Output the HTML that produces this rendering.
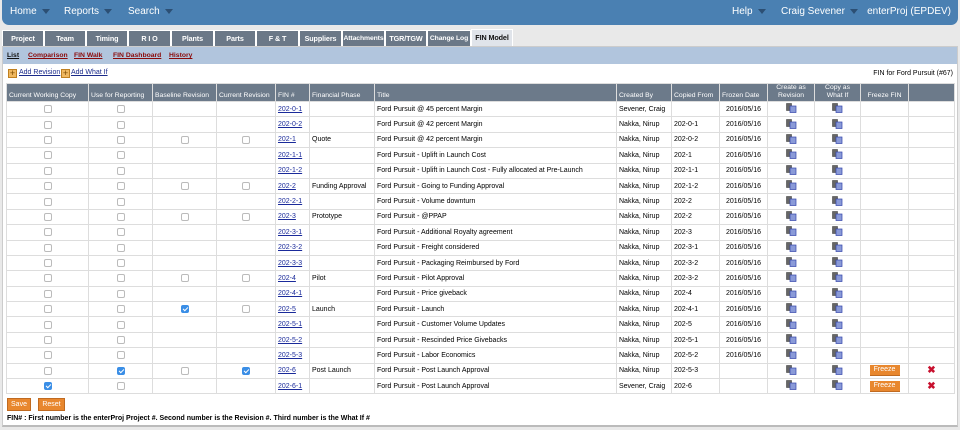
<!DOCTYPE html>
<html><head><meta charset="utf-8"><style>
*{box-sizing:border-box;margin:0;padding:0}
body{width:960px;height:430px;background:#e9e9e9;font-family:"Liberation Sans",Verdana,sans-serif;position:relative;overflow:hidden;font-size:8px;color:#000}
.nav{position:absolute;left:2px;top:0;width:956px;height:25px;background:#4a80b2;border-radius:0 0 7px 7px;color:#fff;font-size:10px}
.nav span{position:absolute;top:6px;white-space:nowrap}
.arr{display:inline-block;width:0;height:0;border-left:4px solid transparent;border-right:4px solid transparent;border-top:5px solid #2c4f74;margin-left:5px;vertical-align:middle}
.tabs{position:absolute;top:30px;left:0;height:16px}
.tab{position:absolute;top:0;height:16px;background:#6b7887;color:#fff;font-weight:bold;font-size:7.2px;text-align:center;line-height:16px;border:1px solid #fff;border-bottom:none;white-space:nowrap;overflow:hidden;letter-spacing:-0.1px}
.tab.act{background:#e0e4ea;color:#111;top:-1px;height:17px}
.box{position:absolute;left:2px;top:46px;width:956px;height:381px;background:#fff;border:1px solid #ccc;border-bottom:2px solid #bbb}
.sub{position:absolute;left:0;top:0;width:954px;height:17px;background:#b1c5dd;font-size:6.8px;font-weight:bold;line-height:17px}
.sub span{position:absolute;top:0;color:#8b0a0a;text-decoration:underline;white-space:nowrap}
.add{position:absolute;top:22px;font-size:7px;color:#1a2a8a;text-decoration:underline;white-space:nowrap}
.plus{position:absolute;top:22px;width:9px;height:9px;background:#f0b860;border:1px solid #c08020;font-size:9px;line-height:7px;text-align:center;color:#7a4a00}
table{position:absolute;left:3px;top:36px;border-collapse:collapse;table-layout:fixed;width:948px}
th{background:#6c7a8a;color:#fff;font-weight:normal;font-size:6.8px;height:17px;border:1px solid #ddd;text-align:left;padding:0 2px;line-height:8px;vertical-align:bottom;padding-bottom:1px;white-space:nowrap;overflow:hidden}
th.c{text-align:center}
td{height:15.4px;border:1px solid #ddd;font-size:7px;padding:0 2px;white-space:nowrap;overflow:hidden}
td.c{text-align:center}
.cb{display:inline-block;width:8px;height:8px;border:1px solid #bbb;border-radius:2px;vertical-align:middle;background:#fff}
.cb.k{background:#3a8ee6;border-color:#3a8ee6;position:relative}
.cb.k:after{content:"";position:absolute;left:2px;top:0;width:2px;height:4px;border:solid #fff;border-width:0 1.3px 1.3px 0;transform:rotate(45deg)}
a{color:#1a2a9a;text-decoration:underline}
.btn{position:absolute;background:#e8872e;color:#fff;font-size:7px;text-align:center;border:1px solid #c06a20}
.fz{display:inline-block;width:30px;height:11px;line-height:10px;background:#e8872e;color:#fff;font-size:7px;vertical-align:middle;border-bottom:1px solid #c06a20}
.x{color:#c8102e;font-weight:bold;font-size:10px}
</style></head><body>
<div class="nav">
<span style="left:8px">Home<i class="arr"></i></span>
<span style="left:62px">Reports<i class="arr"></i></span>
<span style="left:126px">Search<i class="arr"></i></span>
<span style="left:730px">Help<i class="arr"></i></span>
<span style="left:779px">Craig Sevener<i class="arr"></i></span>
<span style="right:7px">enterProj (EPDEV)</span>
</div>
<div class="tabs">
<div class="tab" style="left:2px;width:42px">Project</div>
<div class="tab" style="left:44px;width:42px">Team</div>
<div class="tab" style="left:86px;width:42px">Timing</div>
<div class="tab" style="left:128px;width:43px">R I O</div>
<div class="tab" style="left:171px;width:43px">Plants</div>
<div class="tab" style="left:214px;width:42px">Parts</div>
<div class="tab" style="left:256px;width:43px">F &amp; T</div>
<div class="tab" style="left:299px;width:43px">Suppliers</div>
<div class="tab" style="left:342px;width:43px;font-size:6.8px">Attachments</div>
<div class="tab" style="left:385px;width:42px">TGR/TGW</div>
<div class="tab" style="left:427px;width:44px;font-size:6.8px">Change Log</div>
<div class="tab act" style="left:471px;width:42px">FIN Model</div>
</div>
<div class="box">
<div class="sub"><span style="left:4px;color:#111">List</span><span style="left:25px">Comparison</span><span style="left:71px">FIN Walk</span><span style="left:110px">FIN Dashboard</span><span style="left:166px">History</span></div>
<div class="plus" style="left:5px">+</div><div class="add" style="left:16px">Add Revision</div>
<div class="plus" style="left:58px">+</div><div class="add" style="left:68px">Add What If</div>
<div style="position:absolute;right:4px;top:23px;font-size:7px">FIN for Ford Pursuit (#67)</div>
<table>
<colgroup><col style="width:82px"><col style="width:64px"><col style="width:64px"><col style="width:59px"><col style="width:34px"><col style="width:65px"><col style="width:242px"><col style="width:55px"><col style="width:48px"><col style="width:48px"><col style="width:47px"><col style="width:46px"><col style="width:48px"><col style="width:46px"></colgroup>
<tr><th>Current Working Copy</th><th>Use for Reporting</th><th>Baseline Revision</th><th>Current Revision</th><th>FIN #</th><th>Financial Phase</th><th>Title</th><th>Created By</th><th>Copied From</th><th>Frozen Date</th><th class="c">Create as<br>Revision</th><th class="c">Copy as<br>What If</th><th class="c">Freeze FIN</th><th></th></tr>
<tbody id="tb"></tbody>
</table>
<div class="btn" style="left:4px;top:351px;width:24px;height:13px;line-height:12px">Save</div>
<div class="btn" style="left:35px;top:351px;width:27px;height:13px;line-height:12px">Reset</div>
<div style="position:absolute;left:4px;top:368px;font-size:7px;font-weight:bold">FIN# : First number is the enterProj Project #. Second number is the Revision #. Third number is the What If #</div>
</div>
<script>
var ic='<svg width="11" height="10" viewBox="0 0 11 10"><rect x="0.5" y="0.5" width="5" height="7" fill="#666" stroke="#444" stroke-width="0.6"/><rect x="4" y="3" width="6" height="6.5" fill="#8a9ad8" stroke="#3344aa" stroke-width="0.7"/></svg>';
var R=[
["","","","","202-0-1","","Ford Pursuit @ 45 percent Margin","Sevener, Craig","","2016/05/16"],
["","","","","202-0-2","","Ford Pursuit @ 42 percent Margin","Nakka, Nirup","202-0-1","2016/05/16"],
["","","o","o","202-1","Quote","Ford Pursuit @ 42 percent Margin","Nakka, Nirup","202-0-2","2016/05/16"],
["","","","","202-1-1","","Ford Pursuit - Uplift in Launch Cost","Nakka, Nirup","202-1","2016/05/16"],
["","","","","202-1-2","","Ford Pursuit - Uplift in Launch Cost - Fully allocated at Pre-Launch","Nakka, Nirup","202-1-1","2016/05/16"],
["","","o","o","202-2","Funding Approval","Ford Pursuit - Going to Funding Approval","Nakka, Nirup","202-1-2","2016/05/16"],
["","","","","202-2-1","","Ford Pursuit - Volume downturn","Nakka, Nirup","202-2","2016/05/16"],
["","","o","o","202-3","Prototype","Ford Pursuit - @PPAP","Nakka, Nirup","202-2","2016/05/16"],
["","","","","202-3-1","","Ford Pursuit - Additional Royalty agreement","Nakka, Nirup","202-3","2016/05/16"],
["","","","","202-3-2","","Ford Pursuit - Freight considered","Nakka, Nirup","202-3-1","2016/05/16"],
["","","","","202-3-3","","Ford Pursuit - Packaging Reimbursed by Ford","Nakka, Nirup","202-3-2","2016/05/16"],
["","","o","o","202-4","Pilot","Ford Pursuit - Pilot Approval","Nakka, Nirup","202-3-2","2016/05/16"],
["","","","","202-4-1","","Ford Pursuit - Price giveback","Nakka, Nirup","202-4","2016/05/16"],
["","","k","o","202-5","Launch","Ford Pursuit - Launch","Nakka, Nirup","202-4-1","2016/05/16"],
["","","","","202-5-1","","Ford Pursuit - Customer Volume Updates","Nakka, Nirup","202-5","2016/05/16"],
["","","","","202-5-2","","Ford Pursuit - Rescinded Price Givebacks","Nakka, Nirup","202-5-1","2016/05/16"],
["","","","","202-5-3","","Ford Pursuit - Labor Economics","Nakka, Nirup","202-5-2","2016/05/16"],
["","k","o","k","202-6","Post Launch","Ford Pursuit - Post Launch Approval","Nakka, Nirup","202-5-3",""],
["k","","","","202-6-1","","Ford Pursuit - Post Launch Approval","Sevener, Craig","202-6",""]];
function cb(v,always){if(v=="k")return '<span class="cb k"></span>';if(v=="o"||always)return '<span class="cb"></span>';return ''}
var h='';R.forEach(function(r){var last=r[9]=="";
h+='<tr><td class="c">'+cb(r[0],1)+'</td><td class="c">'+cb(r[1],1)+'</td><td class="c">'+cb(r[2])+'</td><td class="c">'+cb(r[3])+'</td><td><a>'+r[4]+'</a></td><td>'+r[5]+'</td><td>'+r[6]+'</td><td>'+r[7]+'</td><td>'+r[8]+'</td><td class="c">'+r[9]+'</td><td class="c">'+ic+'</td><td class="c">'+ic+'</td><td class="c">'+(last?'<span class="fz">Freeze</span>':'')+'</td><td class="c">'+(last?'<span class="x">✖</span>':'')+'</td></tr>';});
document.getElementById('tb').innerHTML=h;
</script>
</body></html>
